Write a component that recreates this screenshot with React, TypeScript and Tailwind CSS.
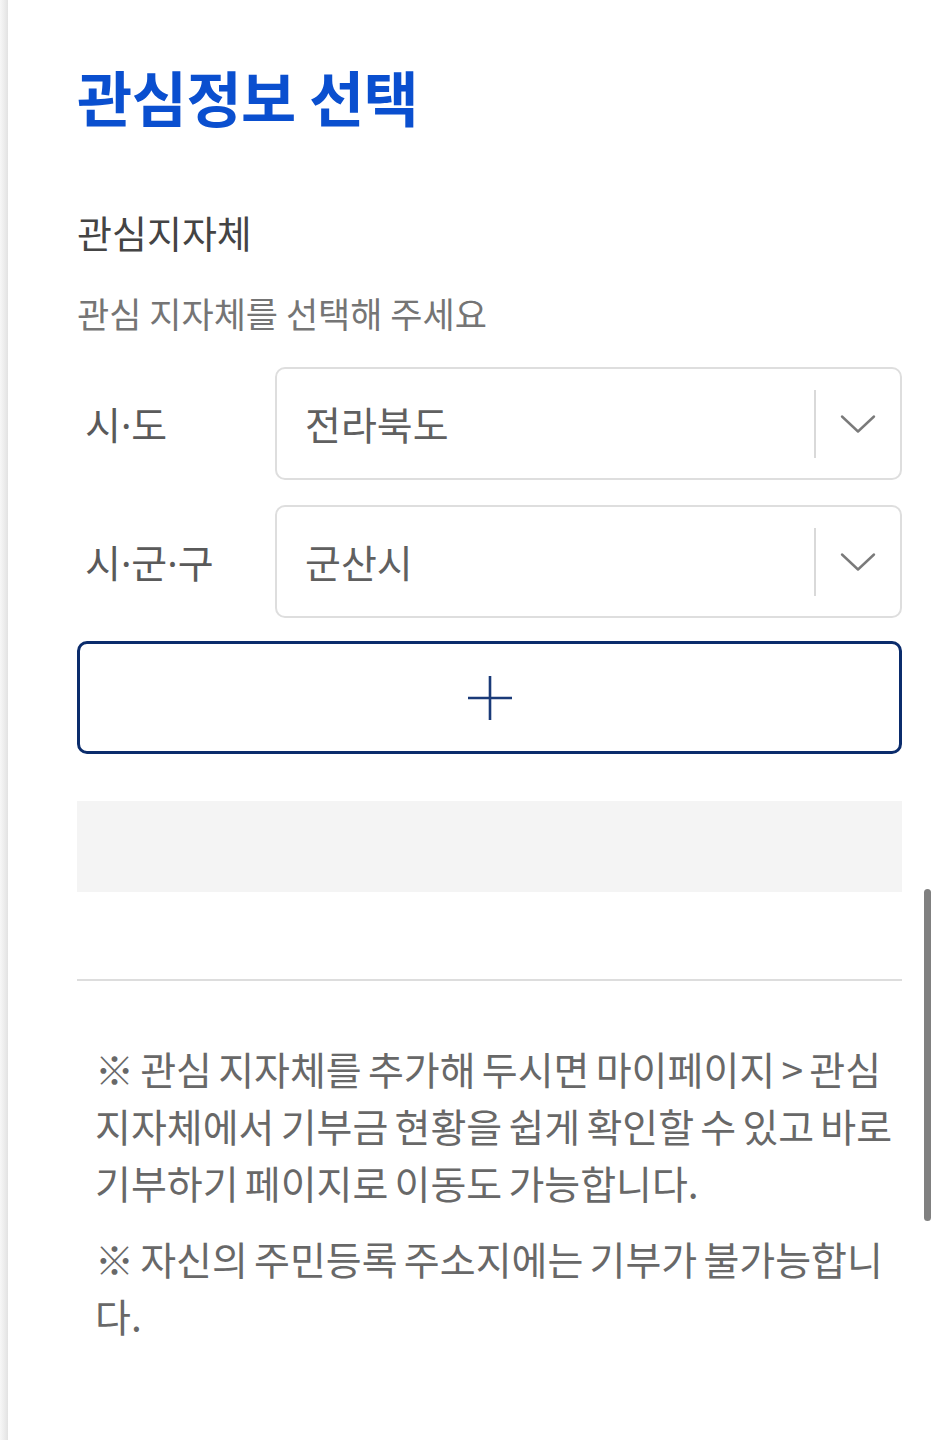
import React from "react";

const font = "font-['Noto_Sans_CJK_KR','Noto_Sans',sans-serif]";

function Dot() {
  return <span className="font-['Noto_Sans',sans-serif]">·</span>;
}

function Chevron() {
  return (
    <svg width="36" height="20" viewBox="0 0 36 20" fill="none">
      <path d="M2 2.5 L18 17.5 L34 2.5" stroke="#7a7a7a" strokeWidth="2.4" strokeLinecap="round" strokeLinejoin="round" />
    </svg>
  );
}

function SelectRow({ label, value }: { label: React.ReactNode; value: string }) {
  return (
    <div className="flex items-center">
      <div className="w-[198px] pl-[8px] text-[39px] leading-none text-[#5a5a5a]">{label}</div>
      <div className="flex h-[113px] flex-1 items-center rounded-[10px] border-2 border-[#dedede] bg-white">
        <div className="flex-1 pl-[28px] text-[39px] leading-none text-[#606060]">{value}</div>
        <div className="h-[68px] w-[2px] bg-[#d9d9d9]" />
        <div className="flex w-[84px] items-center justify-center">
          <Chevron />
        </div>
      </div>
    </div>
  );
}

export default function App() {
  return (
    <div className={`relative flex min-h-[1440px] w-full bg-white ${font}`}>
      <div className="w-[8px] shrink-0 bg-[linear-gradient(to_right,#f7f7f7,#efefef_40%,#e2e2e2)]" />
      <div className="flex-1 pl-[69px] pr-[37px]">
        <h1 className="mt-[58px] text-[60px] font-bold leading-[76px] tracking-[-0.5px] text-[#0a4fcf]">관심정보 선택</h1>
        <h2 className="mt-[75px] text-[38px] leading-[46px] text-[#444444]">관심지자체</h2>
        <p className="mt-[36px] text-[35px] leading-[44px] text-[#757575]">관심 지자체를 선택해 주세요</p>
        <div className="mt-[32px] flex flex-col gap-[25px]">
          <SelectRow label={<>시<Dot />도</>} value="전라북도" />
          <SelectRow label={<>시<Dot />군<Dot />구</>} value="군산시" />
        </div>
        <button className="mt-[23px] flex h-[113px] w-full items-center justify-center rounded-[10px] border-[3px] border-[#0b2c6c] bg-white">
          <svg width="46" height="46" viewBox="0 0 46 46">
            <path d="M23 1 V45 M1 23 H45" stroke="#1a3a78" strokeWidth="2.6" />
          </svg>
        </button>
        <div className="mt-[47px] h-[91px] w-full bg-[#f4f4f4]" />
        <div className="mt-[87px] h-[2px] w-full bg-[#dddddd]" />
        <div className="mt-[59px] pl-[18px] text-[39px] leading-[57px] [word-spacing:-2.5px] text-[#686868]">
          <p>※ 관심 지자체를 추가해 두시면 마이페이지 &gt; 관심 지자체에서 기부금 현황을 쉽게 확인할 수 있고 바로 기부하기 페이지로 이동도 가능합니다.</p>
          <p className="mt-[19px]">※ 자신의 주민등록 주소지에는 기부가 불가능합니다.</p>
        </div>
      </div>
      <div className="absolute left-[924px] top-[889px] h-[332px] w-[7px] rounded-full bg-[#808080]" />
    </div>
  );
}
